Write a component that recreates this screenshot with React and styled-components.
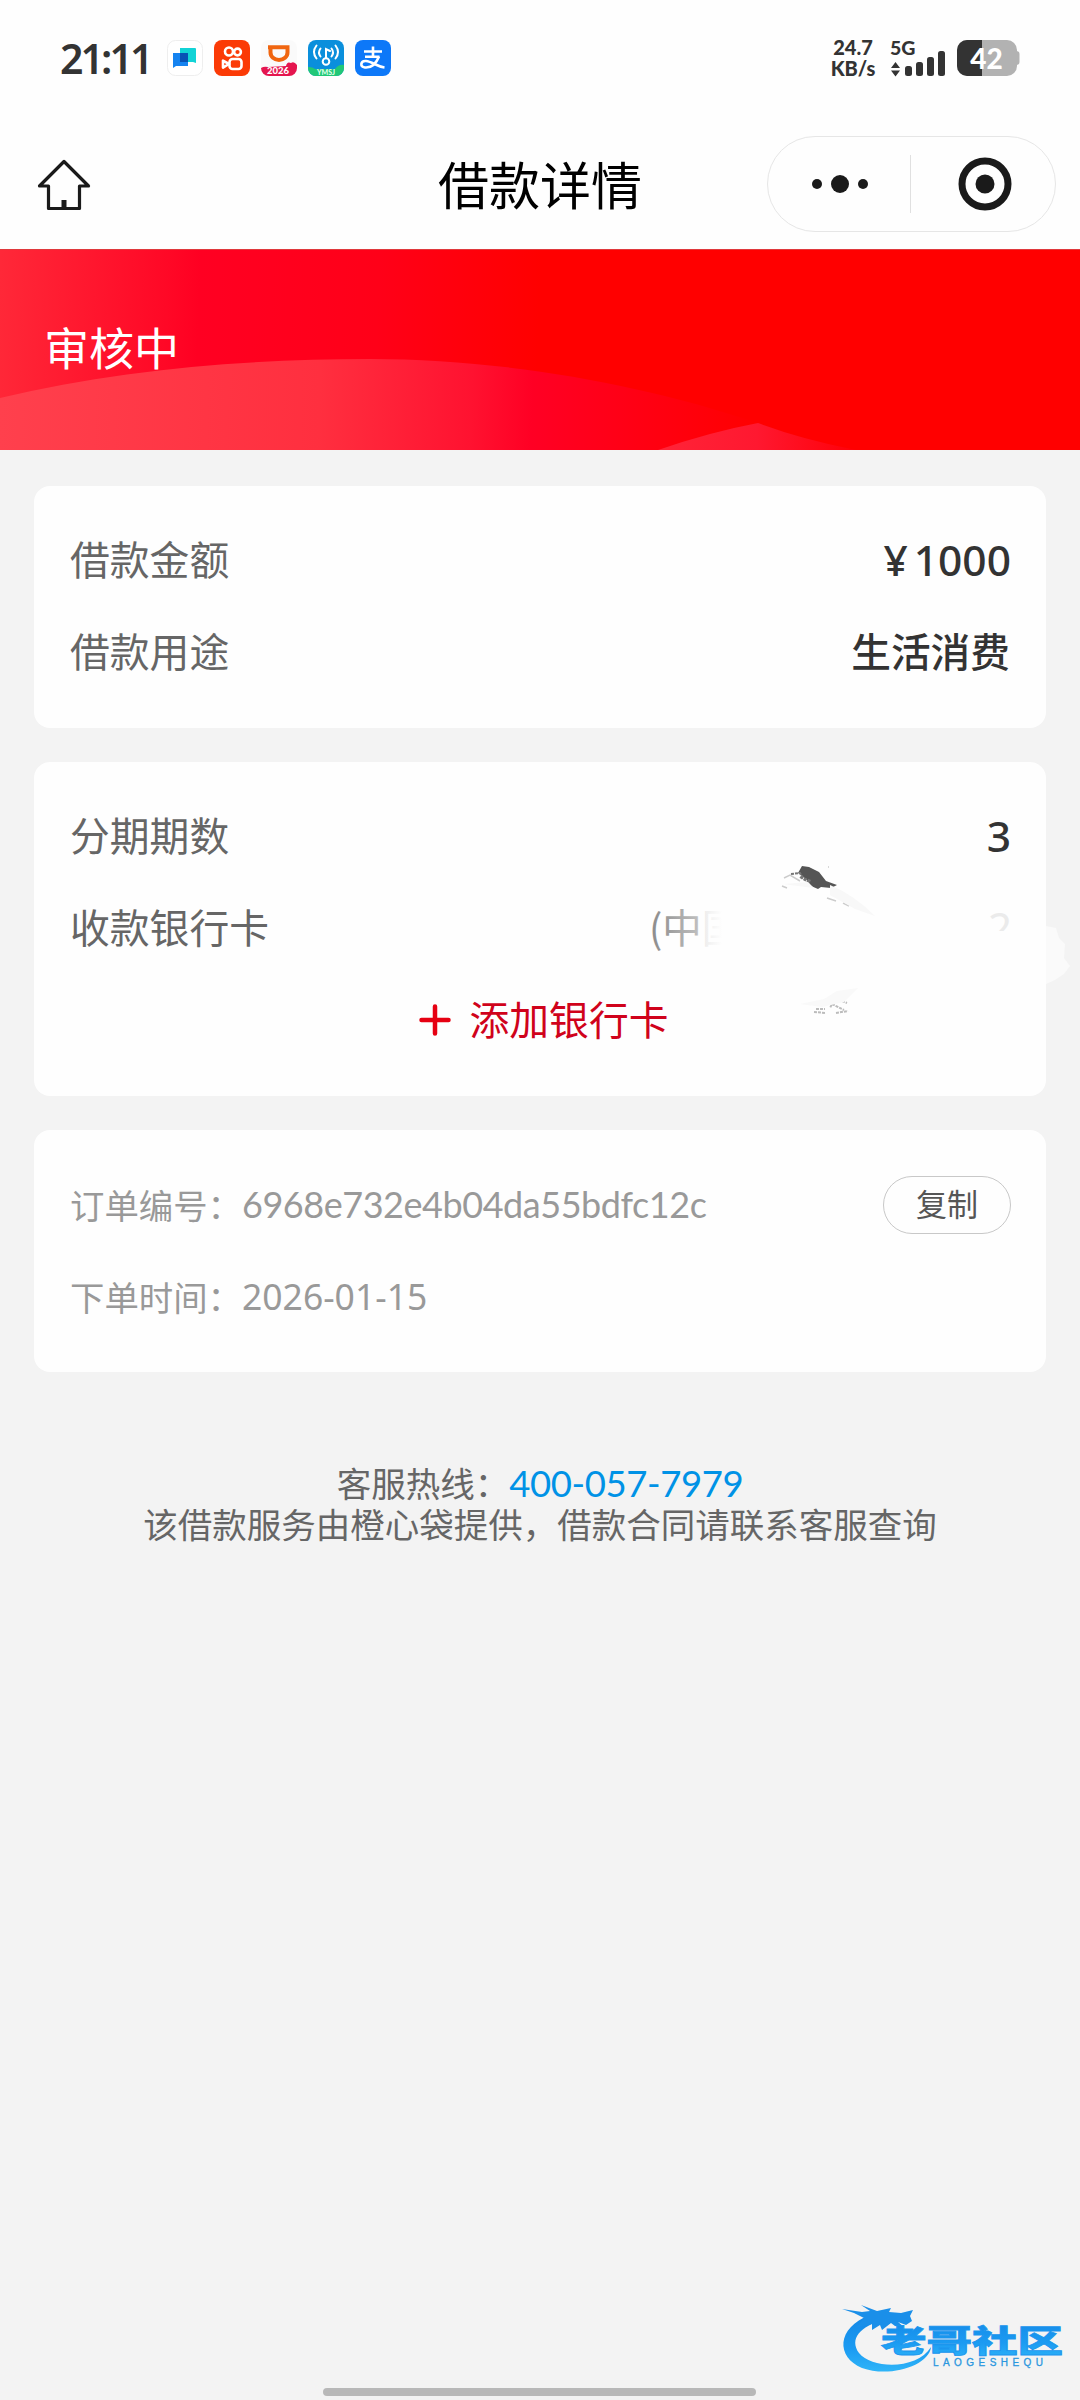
import React from 'react';
import styled, { createGlobalStyle } from 'styled-components';

const cjk = '"Noto Sans CJK SC", sans-serif';

const GlobalStyle = createGlobalStyle`
    body {
        margin: 0;
        background: #f3f3f3;
        font-family: "Noto Sans", ${cjk};
    }
    * {
        box-sizing: border-box;
    }
    svg {
        display: block;
        flex: none;
        overflow: visible;
    }
`
const Page = styled.div`
    position: relative;
    display: flex;
    flex-direction: column;
    width: 1080px;
    height: 2400px;
    background: #f3f3f3;
    overflow: hidden;
`
const StatusBar = styled.div`
    display: flex;
    align-items: center;
    justify-content: space-between;
    height: 116px;
    padding: 0 60px 0 60px;
    background: #fefefe;
    color: #333;
`
const StatusGroup = styled.div`
    display: flex;
    align-items: center;
`
const Clock = styled.span`
    width: 107px;
    font: 600 41px/1 "Noto Sans", sans-serif;
    letter-spacing: -2.9px;
    white-space: nowrap;
`
const AppIcons = styled.div`
    display: flex;
    gap: 11px;
`
const Speed = styled.div`
    width: 46px;
    margin-right: 14px;
    font: 900 20px/21px Lato, sans-serif;
    white-space: nowrap;
    text-align: center;
`
const Signal = styled.div`
    width: 55px;
    height: 36px;
    margin-right: 12px;
`
const NavBar = styled.div`
    display: grid;
    grid-template-columns: 1fr auto 1fr;
    align-items: center;
    height: 133px;
    padding: 0 24px 0 36px;
    background: #fefefe;
`
const NavTitle = styled.h1`
    margin: 0;
    padding-right: 12px;
    font: 400 51px/60px ${cjk};
    color: #000;
`
const HomeSlot = styled.div`
    width: 56px;
    padding-top: 4px;
`
const Capsule = styled.div`
    justify-self: end;
    display: flex;
    align-items: center;
    width: 289px;
    height: 96px;
    margin-top: 2px;
    border: 1px solid #e6e6e6;
    border-radius: 48px;
`
const CapsuleButton = styled.div`
    flex: 1;
    display: flex;
    align-items: center;
    justify-content: center;
    height: 58px;
    padding-left: 2px;
    & + & {
        padding-left: 4px;
        border-left: 1px solid #e0e0e0;
    }
`
const Banner = styled.div`
    display: grid;
    height: 201px;
    align-items: center;
    background: #f00;
    & > * {
        grid-area: 1 / 1;
    }
`
const BannerText = styled.span`
    z-index: 1;
    padding: 0 0 6px 44px;
    font: 400 45px/60px ${cjk};
    color: #fff;
`
const Content = styled.main`
    display: flex;
    flex-direction: column;
    gap: 34px;
    padding: 36px 34px 0;
`
const Card = styled.section`
    position: relative;
    height: ${props => props.$height}px;
    padding: 28px 35px 0 36px;
    background: #fefefe;
    border-radius: 16px;
`
const Row = styled.div`
    display: flex;
    align-items: center;
    justify-content: space-between;
    height: 92px;
`
const Label = styled.span`
    padding-bottom: 4px;
    font: 400 39.8px/60px ${cjk};
    color: #666;
`
const Value = styled.span`
    padding: 0 1px 4px 0;
    font: 500 39.7px/60px ${cjk};
    color: #333;
`
const NumberValue = styled.span`
    font: 500 42.5px/60px "Noto Sans", ${cjk};
    word-spacing: -5px;
    color: #333;
`
const AddCard = styled.div`
    display: flex;
    align-items: center;
    justify-content: center;
    gap: 19px;
    height: 92px;
    padding-left: 6px;
    color: #d0021b;
`
const AddText = styled.span`
    padding-bottom: 4px;
    font: 400 39.8px/60px ${cjk};
`
const Meta = styled.div`
    display: flex;
    align-items: center;
    padding-bottom: 1px;
    font: 400 34.4px/50px ${cjk};
    color: #999;
`
const OrderId = styled.span`
    font: 400 36px/50px Lato, sans-serif;
    letter-spacing: -0.45px;
`
const OrderDate = styled.span`
    font: 400 35.5px/50px "Noto Sans", sans-serif;
`
const CopyButton = styled.button`
    width: 128px;
    height: 58px;
    margin-top: 2px;
    padding: 0 0 4px;
    border: 1px solid #c8c8c8;
    border-radius: 29px;
    background: #fefefe;
    font: 400 31px/50px ${cjk};
    color: #555;
`
const Footer = styled.footer`
    margin-top: 90px;
    text-align: center;
    font: 400 34.5px/40px ${cjk};
    color: #666;
`
const Phone = styled.span`
    font: 400 36.5px/40px Lato, sans-serif;
    letter-spacing: -0.4px;
    color: #0092e6;
`
const Smudge = styled.svg`
    position: absolute;
    left: 586px;
    top: 58px;
`
const Watermark = styled.svg`
    position: absolute;
    left: 838px;
    top: 2296px;
`
const HomeIndicator = styled.div`
    position: absolute;
    left: 323px;
    bottom: 4px;
    width: 433px;
    height: 8px;
    border-radius: 4px;
    background: #b8b8b8;
`

const ChatIcon = () => (
    <svg width="36" height="36" viewBox="0 0 36 36">
        <rect x=".5" y=".5" width="35" height="35" rx="8" fill="#fff" stroke="#eee" />
        <path d="M13 8h15q1 0 1 1v14l-3-1H13z" fill="#12d3d6" />
        <path d="M6 13h15v13H9l-3 2z" fill="#1583f0" />
        <path d="M13 13h8v9h-8z" fill="#0752b5" />
    </svg>
)

const KuaiIcon = () => (
    <svg width="36" height="36" viewBox="0 0 36 36">
        <rect width="36" height="36" rx="8" fill="#fb3a06" />
        <g fill="none" stroke="#fff" strokeWidth="2.6">
            <circle cx="15" cy="11.5" r="4" />
            <circle cx="23.5" cy="12" r="3.4" />
            <rect x="15.5" y="19" width="12" height="10" rx="3" />
            <path d="M15 24l-6-3.4v7z" strokeLinejoin="round" />
        </g>
    </svg>
)

const DidiIcon = () => (
    <svg width="36" height="36" viewBox="0 0 36 36">
        <clipPath id="didi"><rect width="36" height="36" rx="8" /></clipPath>
        <g clipPath="url(#didi)">
            <rect width="36" height="36" fill="#fafafa" />
            <path d="M7 7.2h19.5v5.3a8.5 7.5 0 0 1-17 0V7" fill="none" stroke="#f0650f" strokeWidth="4" />
            <path d="M0 28q3-2 7-1l18-1q1-5 5-3 3-2 6 2v11H0z" fill="#e5164f" />
            <text x="17" y="34" textAnchor="middle" fontFamily="Lato" fontWeight="900" fontSize="9.5" fill="#fff">2026</text>
        </g>
    </svg>
)

const WifiKeyIcon = () => (
    <svg width="36" height="36" viewBox="0 0 36 36">
        <clipPath id="wifikey"><rect width="36" height="36" rx="8" /></clipPath>
        <g clipPath="url(#wifikey)">
            <rect width="36" height="36" fill="#0a8fdc" />
            <path d="M0 27q5 0 7 2h20q4-5 9-4v11H0z" fill="#21c776" />
            <g fill="none" stroke="#fff" strokeWidth="2" strokeLinecap="round">
                <circle cx="18" cy="21.5" r="3.3" />
                <path d="M18 18V9l4 2" />
                <path d="M12.5 16.5q-3-4 0-8M8.5 18.5q-5-6.5 0-13M23.5 16.5q3-4 0-8M27.5 18.5q5-6.5 0-13" />
            </g>
            <text x="18" y="34.5" textAnchor="middle" fontFamily="Lato" fontWeight="900" fontSize="7" fill="#dfffe8">YMSJ</text>
        </g>
    </svg>
)

const AlipayIcon = () => (
    <svg width="36" height="36" viewBox="0 0 36 36">
        <rect width="36" height="36" rx="8" fill="#0d78f8" />
        <g fill="none" stroke="#fff" strokeWidth="2.6">
            <path d="M9 11.5h18M18 6.5v10M10 16.7h14.5" />
            <path d="M24 16.5C21 24 16 28 10 27.5C4.5 26.5 5.5 20.5 11 21C17 21.5 22 26.5 29.5 27.5" />
        </g>
    </svg>
)

const SignalBars = () => (
    <svg width="55" height="36" viewBox="0 0 55 36" fill="#333">
        <text x="0" y="15" fontFamily="Lato" fontWeight="900" fontSize="19.5">5G</text>
        <path d="M1 28l4.5-6 4.5 6zM1 30.5l4.5 6 4.5-6z" />
        <rect x="15" y="26" width="7" height="10" rx="2.5" />
        <rect x="26" y="22" width="7" height="14" rx="2.5" />
        <rect x="37" y="17" width="7" height="19" rx="2.5" />
        <rect x="48" y="11" width="7" height="25" rx="2.5" />
    </svg>
)

const Battery = () => (
    <svg width="63" height="36" viewBox="0 0 63 36">
        <clipPath id="battery"><rect width="60" height="36" rx="10" /></clipPath>
        <path d="M59 11q3.5 0 3.5 3v8q0 3-3.5 3z" fill="#b2b2b2" />
        <g clipPath="url(#battery)">
            <rect width="60" height="36" fill="#b2b2b2" />
            <rect width="25" height="36" fill="#333" />
        </g>
        <text x="29.5" y="29" textAnchor="middle" fontFamily="Lato" fontWeight="900" fontSize="28" fill="#fff">42</text>
    </svg>
)

const HomeIcon = () => (
    <svg width="56" height="54" viewBox="0 0 56 54" fill="none" stroke="#1a1a1a" strokeWidth="3.2" strokeLinejoin="round">
        <path d="M28 3.5L52.5 28H43.5V50.5H12.5V28H3.5Z" />
        <path d="M28 42v8" strokeWidth="5" />
    </svg>
)

const BannerArt = () => (
    <svg width="1080" height="201" viewBox="0 0 1080 201">
        <defs>
            <linearGradient id="glow" gradientUnits="userSpaceOnUse" x1="0" y1="30" x2="540" y2="50">
                <stop offset="0" stopColor="#ff2838" />
                <stop offset=".31" stopColor="#ff0826" />
                <stop offset=".37" stopColor="#ff0022" />
                <stop offset=".7" stopColor="#ff0018" />
                <stop offset="1" stopColor="#ff0000" />
            </linearGradient>
            <linearGradient id="hill" gradientUnits="userSpaceOnUse" x1="0" y1="150" x2="760" y2="170">
                <stop offset="0" stopColor="#ff404d" />
                <stop offset=".42" stopColor="#ff2f3f" />
                <stop offset=".62" stopColor="#ff1230" />
                <stop offset=".7" stopColor="#ff0024" />
                <stop offset="1" stopColor="#ff0000" />
            </linearGradient>
            <linearGradient id="peak" x1="0" x2="1">
                <stop offset="0" stopColor="#ff2438" />
                <stop offset=".5" stopColor="#ff1830" />
                <stop offset="1" stopColor="#ff0008" />
            </linearGradient>
        </defs>
        <rect width="1080" height="201" fill="url(#glow)" />
        <path d="M0 149C120 120 250 110 370 110C500 110 640 134 758 174L850 201H0Z" fill="url(#hill)" />
        <path d="M658 201Q710 183 758 174Q800 190 856 201Z" fill="url(#peak)" />
        <path d="M0 .5H1080" stroke="#e0383c" />
    </svg>
)

// leftovers of the wiped card number
const WipedNumber = () => (
    <Smudge width="470" height="210" viewBox="620 820 470 210">
        <defs>
            <linearGradient id="fade" gradientUnits="userSpaceOnUse" x1="650" y1="0" x2="730" y2="0">
                <stop offset="0" stopColor="#8a8a8a" />
                <stop offset=".58" stopColor="#bcbcbc" />
                <stop offset=".7" stopColor="#efefef" />
                <stop offset=".9" stopColor="#fefefe" />
            </linearGradient>
            <clipPath id="digitTop"><rect x="985" y="900" width="40" height="31" /></clipPath>
        </defs>
        <text x="649" y="943" fontFamily="Noto Sans CJK SC" fontSize="39.5" fontWeight="400" fill="url(#fade)">(中国</text>
        <text x="988" y="943" fontFamily="Noto Sans" fontSize="42" fill="#ebebeb" clipPath="url(#digitTop)">2</text>
        <path d="M802 866l7 1 10 5 7 9 11 4-6 3-10-1-3 2-7-3-5-7-8-6z" fill="#555" />
        <path d="M791 874l9-1 3 5 8 3M800 877l10 6" fill="none" stroke="#777" strokeWidth="2" strokeDasharray="3 1" />
        <path d="M784 878l6-3 10 6M782 886l5 2M832 888l1 8M827 898l9 3M843 903l6 3M828 867h1" fill="none" stroke="#ccc" strokeWidth="1.5" />
        <path d="M830 885q24 10 45 31l-20-7-25-14zM784 884l24-2 6 6-24-3z" fill="#f8f8f8" />
        <path d="M814 1012l12 1M816 1009h9M825 1002l7 2-2 4M832 1004l12 6M836 1013l12-2M842 1001l5 2" fill="none" stroke="#bcbcbc" strokeWidth="2" strokeDasharray="3 1" />
        <path d="M800 1004l24-5 13-8 21-3-14 14-22 5z" fill="#f9f9f9" />
        <path d="M1046 926l10 2 3 10 6 6-1 14 6 8-6 8-9 6-9 4z" fill="#fafafa" />
    </Smudge>
)

const SiteMark = () => (
    <Watermark width="230" height="86" viewBox="838 2296 230 86">
        <defs>
            <linearGradient id="water" x1="0" y1="0" x2="0" y2="1">
                <stop offset="0" stopColor="#1487e6" />
                <stop offset=".6" stopColor="#1b9bf2" />
                <stop offset="1" stopColor="#2fb5f8" />
            </linearGradient>
        </defs>
        <path d="M870 2315C836 2328 836 2357 862 2368C889 2378 929 2366 931 2347C917 2370 872 2369 859 2353C849 2339 860 2326 884 2320Z" fill="url(#water)" />
        <path d="M842 2309l20 3 8-1-9-6 16 6 14-3-2 4 12 1 12-3-3 6 2 5-6 4-8-3 6 5-9-1-4-3-9 7-2-5-8 5v-6l-16 4 8-10-10-5z" fill="#1a8fe9" />
        <text x="881" y="2352" textLength="182" lengthAdjust="spacingAndGlyphs" fontFamily="Noto Sans CJK SC" fontWeight="900" fontSize="31" fill="url(#water)" stroke="#1b96ee" strokeWidth=".8">老哥社区</text>
        <text x="933" y="2366" textLength="110" fontFamily="Liberation Sans" fontSize="10" fill="#2b97df" stroke="#2b97df" strokeWidth=".3">LAOGESHEQU</text>
    </Watermark>
)

const InfoRow = ({label, children}) => (
    <Row>
        <Label>{label}</Label>
        {children}
    </Row>
)

export default () => {
    return (
        <Page>
            <GlobalStyle />
            <StatusBar>
                <StatusGroup>
                    <Clock>21:11</Clock>
                    <AppIcons>
                        <ChatIcon />
                        <KuaiIcon />
                        <DidiIcon />
                        <WifiKeyIcon />
                        <AlipayIcon />
                    </AppIcons>
                </StatusGroup>
                <StatusGroup>
                    <Speed>24.7<br />KB/s</Speed>
                    <Signal><SignalBars /></Signal>
                    <Battery />
                </StatusGroup>
            </StatusBar>
            <NavBar>
                <HomeSlot><HomeIcon /></HomeSlot>
                <NavTitle>借款详情</NavTitle>
                <Capsule>
                    <CapsuleButton>
                        <svg width="58" height="20" viewBox="0 0 58 20" fill="#1a1a1a">
                            <circle cx="6" cy="10" r="5" />
                            <circle cx="29" cy="10" r="9" />
                            <circle cx="52" cy="10" r="5" />
                        </svg>
                    </CapsuleButton>
                    <CapsuleButton>
                        <svg width="54" height="54" viewBox="0 0 54 54">
                            <circle cx="27" cy="27" r="23" fill="none" stroke="#1a1a1a" strokeWidth="7" />
                            <circle cx="27" cy="27" r="9.5" fill="#1a1a1a" />
                        </svg>
                    </CapsuleButton>
                </Capsule>
            </NavBar>
            <Banner>
                <BannerArt />
                <BannerText>审核中</BannerText>
            </Banner>
            <Content>
                <Card $height={242}>
                    <InfoRow label="借款金额"><NumberValue>¥ 1000</NumberValue></InfoRow>
                    <InfoRow label="借款用途"><Value>生活消费</Value></InfoRow>
                </Card>
                <Card $height={334}>
                    <InfoRow label="分期期数"><NumberValue>3</NumberValue></InfoRow>
                    <InfoRow label="收款银行卡" />
                    <AddCard>
                        <svg width="32" height="32" viewBox="0 0 32 32" stroke="#e60012" strokeWidth="4.5" strokeLinecap="round">
                            <path d="M16 2.5v27M2.5 16h27" />
                        </svg>
                        <AddText>添加银行卡</AddText>
                    </AddCard>
                    <WipedNumber />
                </Card>
                <Card $height={242}>
                    <Row>
                        <Meta>订单编号：<OrderId>6968e732e4b04da55bdfc12c</OrderId></Meta>
                        <CopyButton>复制</CopyButton>
                    </Row>
                    <Row>
                        <Meta>下单时间：<OrderDate>2026-01-15</OrderDate></Meta>
                    </Row>
                </Card>
            </Content>
            <Footer>
                <div>客服热线：<Phone>400-057-7979</Phone></div>
                <div>该借款服务由橙心袋提供，借款合同请联系客服查询</div>
            </Footer>
            <SiteMark />
            <HomeIndicator />
        </Page>
    )
}
